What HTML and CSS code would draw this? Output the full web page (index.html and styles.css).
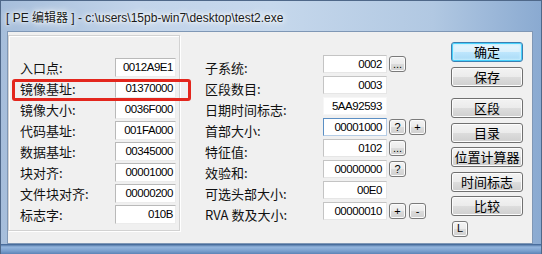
FILE: index.html
```html
<!DOCTYPE html>
<html lang="zh-CN">

<head>
    <meta charset="UTF-8">
    <title>PE 编辑器</title>
    <link rel="stylesheet" href="styles.css">
</head>

<body>

    <div class="window">
        <div class="titlebar">
            <span class="title">[ PE 编辑器 ] - c:\users\15pb-win7\desktop\test2.exe</span>
        </div>

        <div class="client">
            <!-- left group: base info -->
            <div class="group">
                <div class="field"><span class="label">入口点:</span><span class="edit">0012A9E1</span></div>
                <div class="field"><span class="label">镜像基址:</span><span class="edit">01370000</span></div>
                <div class="field"><span class="label">镜像大小:</span><span class="edit">0036F000</span></div>
                <div class="field"><span class="label">代码基址:</span><span class="edit">001FA000</span></div>
                <div class="field"><span class="label">数据基址:</span><span class="edit">00345000</span></div>
                <div class="field"><span class="label">块对齐:</span><span class="edit">00001000</span></div>
                <div class="field"><span class="label">文件块对齐:</span><span class="edit">00000200</span></div>
                <div class="field"><span class="label">标志字:</span><span class="edit">010B</span></div>
            </div>

            <!-- middle column: header fields -->
            <div class="fields">
                <div class="row">
                    <span class="label">子系统:</span><span class="edit">0002</span>
                    <span class="tools"><span class="mini">...</span></span>
                </div>
                <div class="row">
                    <span class="label">区段数目:</span><span class="edit">0003</span>
                </div>
                <div class="row">
                    <span class="label">日期时间标志:</span><span class="edit flat">5AA92593</span>
                </div>
                <div class="row">
                    <span class="label">首部大小:</span><span class="edit focus">00001000</span>
                    <span class="tools"><span class="mini">?</span><span class="mini">+</span></span>
                </div>
                <div class="row">
                    <span class="label">特征值:</span><span class="edit">0102</span>
                    <span class="tools"><span class="mini">...</span></span>
                </div>
                <div class="row">
                    <span class="label">效验和:</span><span class="edit">00000000</span>
                    <span class="tools"><span class="mini">?</span></span>
                </div>
                <div class="row">
                    <span class="label">可选头部大小:</span><span class="edit">00E0</span>
                </div>
                <div class="row">
                    <span class="label">RVA 数及大小:</span><span class="edit">00000010</span>
                    <span class="tools"><span class="mini">+</span><span class="mini">-</span></span>
                </div>
            </div>

            <!-- right column: commands -->
            <div class="commands">
                <button class="btn default">确定</button>
                <button class="btn">保存</button>
                <button class="btn spaced">区段</button>
                <button class="btn">目录</button>
                <button class="btn">位置计算器</button>
                <button class="btn">时间标志</button>
                <button class="btn">比较</button>
                <span class="mini small-l">L</span>
            </div>

            <div class="marker"></div>
        </div>
    </div>

</body>

</html>
```

FILE: styles.css
```css
body {
    margin: 0;
    overflow: hidden;
    font-family: "Noto Sans CJK SC", "Liberation Sans", sans-serif;
}

.window {
    width: 542px;
    height: 254px;
    box-sizing: border-box;
    border: 1px solid #4f6889;
    border-bottom: none;
    display: flex;
    flex-direction: column;
    background:
        linear-gradient(to bottom, transparent 243px, #3a5f90 243px, #94b6de 246px, #7a9fcd 250px, #5c83b6 253px),
        linear-gradient(to right, #a6bedb 0%, #c2d4ea 25%, #c6d8ec 50%, #b1c8e2 80%, #8aaad1 100%);
}

.titlebar {
    height: 30px;
    display: flex;
    align-items: center;
    padding-left: 5px;
}

.title {
    font-family: "Liberation Sans", "Noto Sans CJK SC", sans-serif;
    font-size: 12px;
    color: #1a1a1a;
    text-shadow: 0 0 6px #fff, 0 0 3px #fff, 0 0 10px #fff;
}

.client {
    position: relative;
    width: 526px;
    height: 213px;
    margin-left: 6px;
    box-sizing: border-box;
    border: 1px solid #7f97b5;
    background-color: #f0f0f0;
    display: flex;
    align-items: flex-start;
}

/* etched frame round the left fields */
.group {
    margin-top: 3px;
    width: 172px;
    height: 196px;
    box-sizing: border-box;
    border: 1px solid #d2d2d2;
    box-shadow: inset 1px 1px 0 #fff, 1px 1px 0 #fff;
    padding: 22px 3px 0 11px;
    display: flex;
    flex-direction: column;
    gap: 2px;
}

.field {
    display: flex;
    justify-content: space-between;
    align-items: center;
    height: 19px;
}

.label {
    font-size: 13px;
    color: #111;
    white-space: nowrap;
}

.edit {
    display: block;
    width: 61px;
    height: 19px;
    box-sizing: border-box;
    background-color: #fff;
    border: 1px solid;
    border-color: #b9b9b9 #ececec #ececec #b9b9b9;
    font-family: "Liberation Sans", sans-serif;
    font-size: 11.5px;
    letter-spacing: -0.45px;
    line-height: 17px;
    text-align: right;
    padding-right: 2px;
    color: #000;
}

.fields {
    margin-left: 25px;
    padding-top: 23px;
    display: flex;
    flex-direction: column;
    gap: 3px;
}

.row {
    display: flex;
    align-items: flex-start;
    height: 18px;
}

.row .label {
    width: 118px;
    line-height: 18px;
    margin-top: 4px;
}

.row .edit {
    width: 64px;
    height: 18px;
    line-height: 16px;
    padding-right: 4px;
    border-color: #c4c4c4 #e6e6e6 #e6e6e6 #c4c4c4;
}

.row .edit.flat {
    border-color: #f6f6f6;
}

.row .edit.focus {
    border-color: #5b8fc4 #b6cde6 #b6cde6 #5b8fc4;
}

.tools {
    display: flex;
    gap: 3px;
    margin-left: 2px;
    margin-top: 1px;
}

.mini {
    display: flex;
    align-items: center;
    justify-content: center;
    width: 17px;
    height: 16px;
    box-sizing: border-box;
    border: 1px solid #7a7a7a;
    border-radius: 3px;
    background: linear-gradient(#f4f4f4 0%, #ebebeb 50%, #dcdcdc 50%, #d0d0d0 100%);
    box-shadow: inset 0 0 0 1px #fbfbfb;
    font-family: "Liberation Sans", sans-serif;
    font-size: 11px;
    line-height: 1;
    color: #000;
}

.commands {
    margin-left: auto;
    margin-right: 9px;
    padding-top: 10px;
    width: 72px;
    display: flex;
    flex-direction: column;
    gap: 4.5px;
}

.btn {
    height: 20px;
    padding: 0;
    box-sizing: border-box;
    border: 1px solid #707070;
    border-radius: 3px;
    background: linear-gradient(#f3f3f3 0%, #ebebeb 50%, #dddddd 50%, #cfcfcf 100%);
    box-shadow: inset 0 0 0 1px #fcfcfc;
    font-family: "Noto Sans CJK SC", sans-serif;
    font-size: 13px;
    line-height: 18px;
    color: #000;
}

.btn.default {
    border-color: #3c7fb1;
    background: linear-gradient(#eaf6fd 0%, #d9f0fc 50%, #bee6fd 50%, #a7d9f5 100%);
    box-shadow: inset 0 0 0 1px #48d1fc, inset 0 0 2px 2px #c8eefd;
}

.btn.spaced {
    margin-top: 7px;
}

.small-l {
    width: 16px;
    height: 16px;
    margin-left: 1px;
}

/* red highlight drawn over the image base row */
.marker {
    position: absolute;
    left: 4px;
    top: 47px;
    width: 179px;
    height: 22px;
    box-sizing: border-box;
    border: 3px solid #e3261d;
    border-radius: 3px;
}
```
